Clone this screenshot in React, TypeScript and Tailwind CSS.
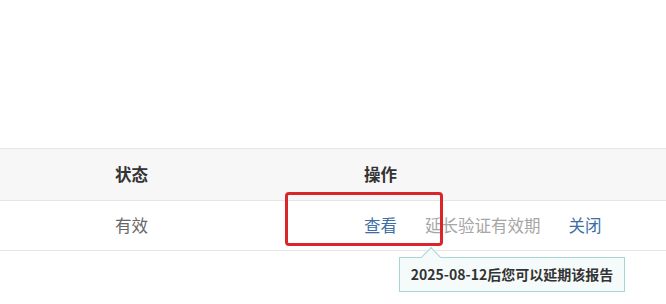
const font = { fontFamily: '"Noto Sans CJK SC", "Noto Sans", sans-serif' };

export default function App() {
  return (
    <div className="relative h-[304px] w-[666px] overflow-hidden bg-white" style={font}>
      <div className="pt-[148px]">
        <div className="grid h-[53px] grid-cols-[115px_249px_1fr] items-center border-y border-[#e6e6e6] bg-[#f7f7f7] text-[16.5px] font-bold text-[#333]">
          <div />
          <div>状态</div>
          <div>操作</div>
        </div>
        <div className="grid h-[50px] grid-cols-[115px_249px_1fr] items-center border-b border-[#e6e6e6] text-[16.5px]">
          <div />
          <div className="text-[#666]">有效</div>
          <div className="flex items-center gap-[28px]">
            <span className="text-[#3e6ea6]">查看</span>
            <span className="text-[#a6a6a6]">延长验证有效期</span>
            <span className="text-[#3e6ea6]">关闭</span>
          </div>
        </div>
      </div>

      {/* highlight box */}
      <div className="absolute left-[285px] top-[192px] h-[54px] w-[158px] rounded-[4px] border-[3px] border-[#d9262b]" />

      {/* tooltip */}
      <div className="absolute left-[399px] top-[257px] flex h-[35px] w-[226px] items-center justify-center border border-[#a8d5d2] bg-[#f5fbfb] text-[14px] font-bold text-[#333]">
        2025-08-12后您可以延期该报告
        <span className="absolute -top-[8px] left-[24px] h-[14px] w-[14px] rotate-45 border-l border-t border-[#a8d5d2] bg-[#f5fbfb]" />
      </div>
    </div>
  );
}
